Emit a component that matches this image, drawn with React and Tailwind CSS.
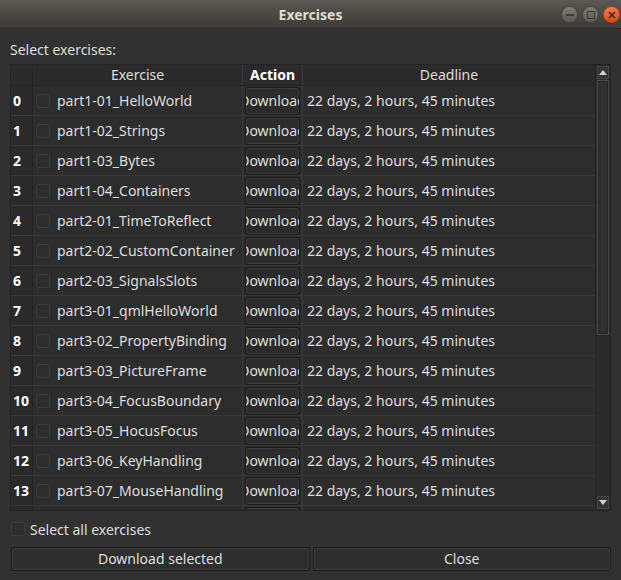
import React from 'react';

const exercises = [
  'part1-01_HelloWorld',
  'part1-02_Strings',
  'part1-03_Bytes',
  'part1-04_Containers',
  'part2-01_TimeToReflect',
  'part2-02_CustomContainer',
  'part2-03_SignalsSlots',
  'part3-01_qmlHelloWorld',
  'part3-02_PropertyBinding',
  'part3-03_PictureFrame',
  'part3-04_FocusBoundary',
  'part3-05_HocusFocus',
  'part3-06_KeyHandling',
  'part3-07_MouseHandling',
  'part3-08_Extra',
];

const Checkbox = () => (
  <div className="w-[14px] h-[14px] shrink-0 rounded-[2px] border border-[#3c3c3c] bg-[#2e2e2e]" />
);

const RowButton = () => (
  <div className="mx-[2px] h-[28px] flex items-center justify-center overflow-hidden rounded-[3px] border border-[#1b1b1b] bg-[#2b2b2b] shadow-[inset_0_0_0_1px_#3a3a3a] whitespace-nowrap">
    <span className="shrink-0">Download</span>
  </div>
);

const Row = ({ i, name }) => (
  <div className="flex h-[30px] shrink-0 border-b border-[#383838]">
    <div className="w-[22px] shrink-0 flex items-center pl-[2px] font-bold text-white bg-[#2a2a2a] border-r border-[#242424]">
      {i}
    </div>
    <div className="w-[210px] shrink-0 flex items-center gap-[7px] pl-[3px] border-r border-[#383838] overflow-hidden whitespace-nowrap">
      <Checkbox />
      <span>{name}</span>
    </div>
    <div className="w-[60px] shrink-0 flex flex-col justify-center border-r border-[#383838]">
      <RowButton />
    </div>
    <div className="flex-1 flex items-center pl-[4px] whitespace-nowrap">
      22 days, 2 hours, 45 minutes
    </div>
  </div>
);

const Scrollbar = () => (
  <div className="w-[15px] shrink-0 flex flex-col bg-[#2a2a2a] border-l border-[#262626]">
    <div className="h-[13px] mx-[1px] mt-[1px] border border-[#464646] bg-[#333333] flex items-center justify-center">
      <svg width="8" height="5" viewBox="0 0 8 5"><path d="M4 0 L8 5 L0 5 Z" fill="#cfcfcf" /></svg>
    </div>
    <div className="flex-1 flex flex-col px-[1px] py-[1px]">
      <div className="h-[255px] border border-[#4a4a4a] bg-[#303030] shadow-[inset_0_0_0_1px_#262626]" />
    </div>
    <div className="h-[13px] mx-[1px] mb-[1px] border border-[#464646] bg-[#333333] flex items-center justify-center">
      <svg width="8" height="5" viewBox="0 0 8 5"><path d="M0 0 L8 0 L4 5 Z" fill="#cfcfcf" /></svg>
    </div>
  </div>
);

export default function App() {
  return (
    <div
      className="w-[621px] h-[580px] flex flex-col bg-[#313131] text-[#dedede] text-[14px] overflow-hidden"
      style={{ fontFamily: '"Noto Sans", "DejaVu Sans", sans-serif' }}
    >
      {/* title bar */}
      <div className="relative h-[29px] shrink-0 flex items-center justify-center bg-gradient-to-b from-[#5a5852] to-[#3c3b37] border-b border-[#2a2a28]">
        <span className="font-bold text-[#dfdbd2] text-[14px]">Exercises</span>
        <div className="absolute right-[1px] top-[6px] flex gap-[4px]">
          <div className="w-[17px] h-[17px] rounded-full bg-gradient-to-b from-[#7c7b76] to-[#5b5a55] border border-[#45443f] flex items-center justify-center">
            <div className="w-[8px] h-[2px] bg-[#3c3b37]" />
          </div>
          <div className="w-[17px] h-[17px] rounded-full bg-gradient-to-b from-[#7c7b76] to-[#5b5a55] border border-[#45443f] flex items-center justify-center">
            <div className="w-[8px] h-[8px] border-[1.5px] border-[#3c3b37]" />
          </div>
          <div className="w-[17px] h-[17px] rounded-full bg-gradient-to-b from-[#f47a4c] to-[#df4a16] border border-[#b8421a] flex items-center justify-center">
            <svg width="8" height="8" viewBox="0 0 8 8"><path d="M1 1 L7 7 M7 1 L1 7" stroke="#3c2a20" strokeWidth="1.6" /></svg>
          </div>
        </div>
      </div>

      <div className="flex-1 flex flex-col px-[10px]">
        <div className="h-[35px] flex items-end pb-[4px]">Select exercises:</div>

        {/* table */}
        <div className="h-[447px] flex border border-[#242424] bg-[#2d2d2d] overflow-hidden">
          <div className="flex-1 flex flex-col overflow-hidden">
            <div className="flex h-[21px] shrink-0 bg-[#2a2a2a] border-b border-[#242424]">
              <div className="w-[22px] shrink-0 border-r border-[#242424]" />
              <div className="w-[210px] shrink-0 flex items-center justify-center pb-[2px] border-r border-[#3a3a3a]">Exercise</div>
              <div className="w-[60px] shrink-0 flex items-center justify-center pb-[2px] font-bold text-white border-r border-[#3a3a3a]">Action</div>
              <div className="flex-1 flex items-center justify-center pb-[2px]">Deadline</div>
            </div>
            {exercises.map((name, i) => (
              <Row key={i} i={i} name={name} />
            ))}
          </div>
          <Scrollbar />
        </div>

        <div className="h-[36px] flex items-center gap-[5px] pl-[1px]">
          <Checkbox />
          <span>Select all exercises</span>
        </div>

        <div className="flex gap-[3px] h-[24px] pl-[1px]">
          <div className="flex-1 flex items-center justify-center pb-[1px] rounded-[3px] border border-[#1e1e1e] bg-[#2e2e2e] shadow-[inset_0_0_0_1px_#3c3c3c]">
            Download selected
          </div>
          <div className="flex-1 flex items-center justify-center pb-[1px] rounded-[3px] border border-[#1e1e1e] bg-[#2e2e2e] shadow-[inset_0_0_0_1px_#3c3c3c]">
            Close
          </div>
        </div>
      </div>
    </div>
  );
}
